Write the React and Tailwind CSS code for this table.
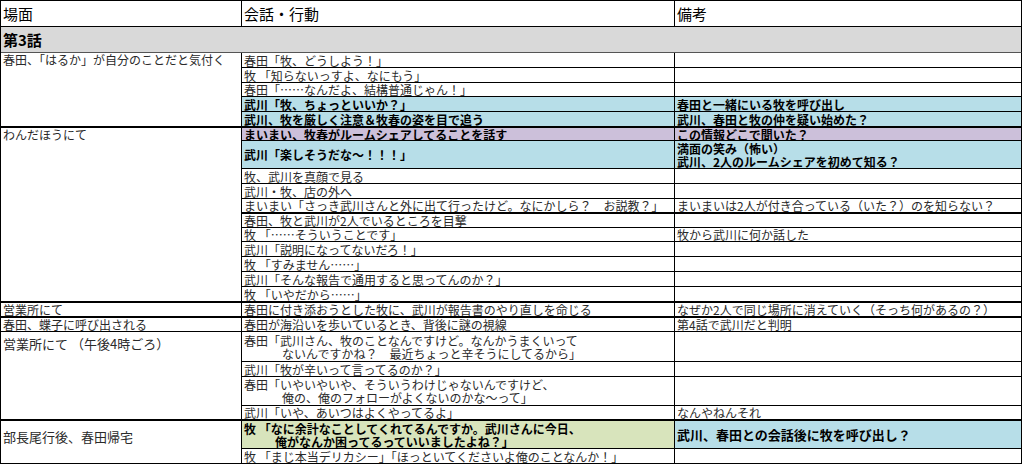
import React from "react";

const BG = {
  blue: "bg-[#b7dee8]",
  purple: "bg-[#ccc0da]",
  green: "bg-[#d8e4bc]",
  none: "bg-white",
};

const rows = [
  { c2: ["春田「牧、どうしよう！」"] },
  { c2: ["牧 「知らないっすよ、なにもう」"] },
  { c2: ["春田「……なんだよ、結構普通じゃん！」"] },
  { c2: ["武川「牧、ちょっといいか？」"], bg2: "blue", bg3: "blue", bold: true, c3: ["春田と一緒にいる牧を呼び出し"] },
  { c2: ["武川、牧を厳しく注意＆牧春の姿を目で追う"], bg2: "blue", bg3: "blue", bold: true, c3: ["武川、春田と牧の仲を疑い始めた？"] },
  { thick: true, c2: ["まいまい、牧春がルームシェアしてることを話す"], bg2: "purple", bg3: "purple", bold: true, c3: ["この情報どこで聞いた？"] },
  { c2: ["武川「楽しそうだな〜！！！」"], bg2: "blue", bg3: "blue", bold: true, c3: ["満面の笑み（怖い）", "武川、2人のルームシェアを初めて知る？"] },
  { c2: ["牧、武川を真顔で見る"] },
  { c2: ["武川・牧、店の外へ"] },
  { c2: ["まいまい「さっき武川さんと外に出て行ったけど。なにかしら？　お説教？」"], c3: ["まいまいは2人が付き合っている（いた？）のを知らない？"] },
  { thick: true, c2: ["春田、牧と武川が2人でいるところを目撃"] },
  { c2: ["牧 「……そういうことです」"], c3: ["牧から武川に何か話した"] },
  { c2: ["武川「説明になってないだろ！」"] },
  { c2: ["牧 「すみません……」"] },
  { c2: ["武川「そんな報告で通用すると思ってんのか？」"] },
  { c2: ["牧 「いやだから……」"] },
  { thick: true, c2: ["春田に付き添おうとした牧に、武川が報告書のやり直しを命じる"], c3: ["なぜか2人で同じ場所に消えていく（そっち何があるの？）"] },
  { thick: true, c2: ["春田が海沿いを歩いているとき、背後に謎の視線"], c3: ["第4話で武川だと判明"] },
  { c2: ["春田「武川さん、牧のことなんですけど。なんかうまくいって", "ないんですかね？　最近ちょっと辛そうにしてるから」"], indent: "pl-[38px]" },
  { c2: ["武川「牧が辛いって言ってるのか？」"] },
  { c2: ["春田「いやいやいや、そういうわけじゃないんですけど、", "俺の、俺のフォローがよくないのかな〜って」"], indent: "pl-[38px]" },
  { c2: ["武川「いや、あいつはよくやってるよ」"], c3: ["なんやねんそれ"] },
  { thick: true, c2: ["牧 「なに余計なことしてくれてるんですか。武川さんに今日、", "俺がなんか困ってるっていいましたよね？」"], indent: "pl-[31px]", bg2: "green", bg3: "blue", bold: true, big3: true, c3: ["武川、春田との会話後に牧を呼び出し？"] },
  { c2: ["牧 「まじ本当デリカシー」「ほっといてくださいよ俺のことなんか！」"] },
];

const col1 = {
  0: { text: "春田、「はるか」が自分のことだと気付く", cls: "row-span-5 items-start" },
  5: { text: "わんだほうにて", cls: "row-span-11 items-start border-t" },
  16: { text: "営業所にて", cls: "items-center border-t" },
  17: { text: "春田、蝶子に呼び出される", cls: "items-center border-t" },
  18: { text: "営業所にて （午後4時ごろ）", cls: "row-span-4 items-start pt-[5px] text-[13px]" },
  22: { text: "部長尾行後、春田帰宅", cls: "row-span-2 items-start pt-[9px] text-[13px] border-t" },
};

function Lines({ lines, indent, bold }) {
  return (
    <div className={bold ? "font-bold text-black" : "text-[#2a2a2a]"}>
      {lines.map((l, i) => (
        <div key={i} className={"h-[13px] leading-[13px] " + (i > 0 && indent ? indent : "")}>
          {l}
        </div>
      ))}
    </div>
  );
}

const cell = "border-r border-b border-black px-[2px] flex whitespace-nowrap";

export default function App() {
  return (
    <div className="w-[1024px] h-[464px] bg-white overflow-hidden font-['Noto_Sans_CJK_JP',sans-serif]">
      <div className="grid w-[1022px] border-t border-l border-black text-[12px] leading-[13px] grid-cols-[241px_433px_347px] grid-rows-[26px_26px_15px_15px_14px_15px_15px_14px_28px_15px_15px_14px_15px_14px_15px_15px_15px_15px_15px_15px_30px_15px_29px_14px_29px_15px]">
        <div className={cell + " items-center text-[15px] leading-[18px] text-black"}>場面</div>
        <div className={cell + " items-center text-[15px] leading-[18px] text-black"}>会話・行動</div>
        <div className={cell + " items-center text-[15px] leading-[18px] text-black"}>備考</div>
        <div className={cell + " col-span-3 items-center bg-[#d9d9d9] text-[15px] leading-[18px] font-bold text-black border-b-[#555]"}>
          第3話
        </div>
        {rows.map((r, i) => {
          const c1 = col1[i];
          const t = r.thick ? " border-t" : "";
          return (
            <React.Fragment key={i}>
              {c1 && (
                <div className={cell + " bg-white text-[#2a2a2a] leading-[14px] " + c1.cls}>{c1.text}</div>
              )}
              <div className={cell + " items-center " + BG[r.bg2 || "none"] + t}>
                <Lines lines={r.c2} indent={r.indent} bold={r.bold} />
              </div>
              <div className={cell + " items-center " + BG[r.bg3 || "none"] + t + (r.big3 ? " text-[13px]" : "")}>
                {r.c3 ? <Lines lines={r.c3} bold={r.bold} /> : null}
              </div>
            </React.Fragment>
          );
        })}
      </div>
    </div>
  );
}
